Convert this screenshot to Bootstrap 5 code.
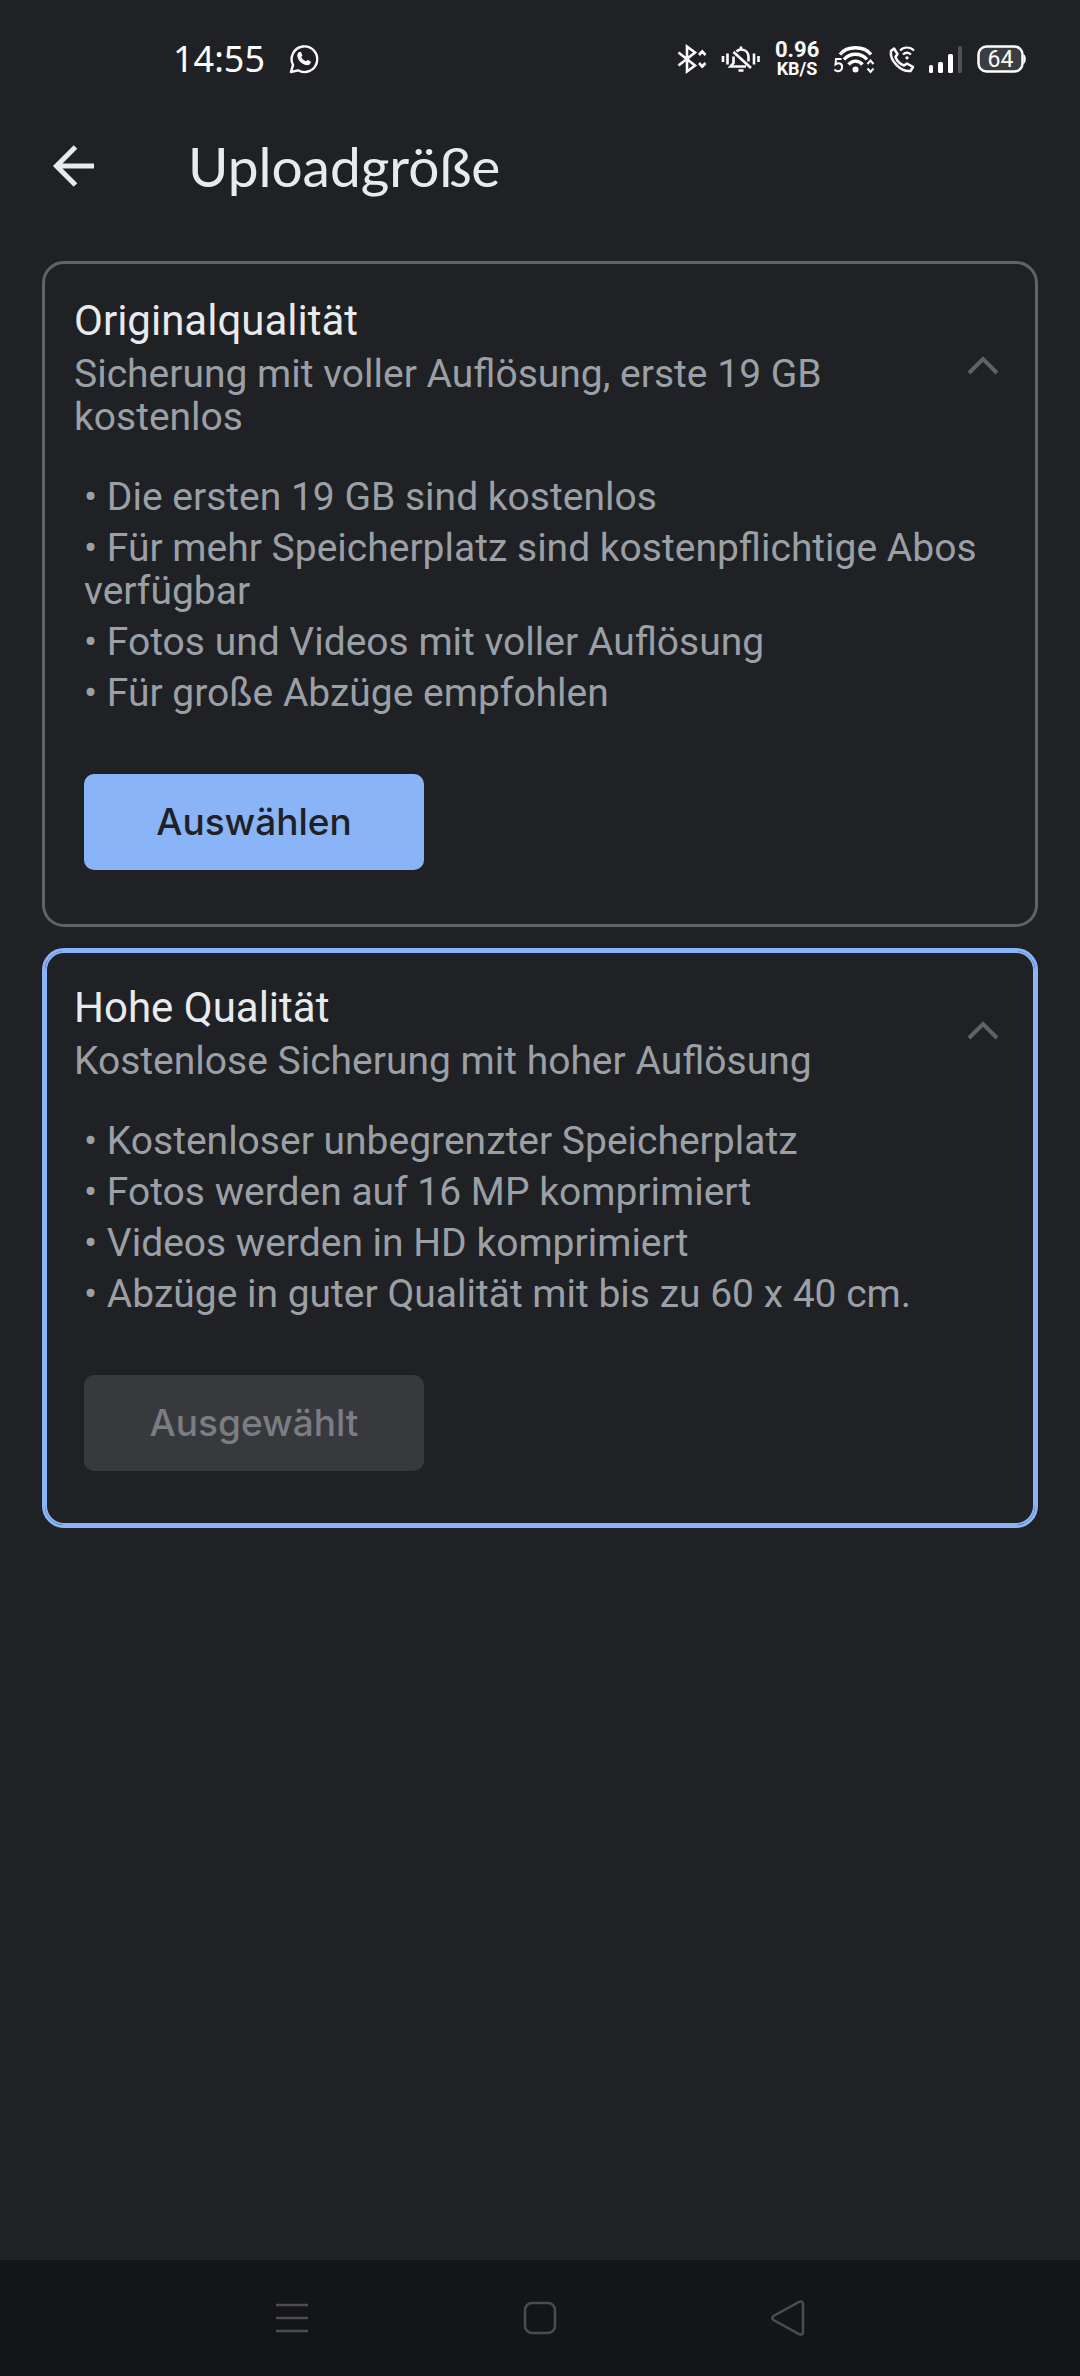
<!DOCTYPE html>
<html lang="de">
<head>
<meta charset="utf-8">
<meta name="viewport" content="width=device-width, initial-scale=1">
<title>Uploadgröße</title>
<link href="https://cdn.jsdelivr.net/npm/bootstrap@5.3.0/dist/css/bootstrap.min.css" rel="stylesheet">
<style>
  body { background: #202124; color: #e8eaed; font-family: Roboto, sans-serif; }
  svg { display: block; flex: none; overflow: visible; }
  .status-bar { height: 118px; padding: 0 53px 0 173px; color: #fff; }
  .status-time { font: 400 36px/40px "Noto Sans", sans-serif; }
  .status-icons { gap: 14px; }
  .net-speed { width: 44px; font-weight: 700; font-size: 22px; line-height: 20px; text-align: center; }
  .net-speed .unit { font-size: 18px; line-height: 18px; }
  .battery-text { font: 400 23px Roboto, sans-serif; }
  .app-bar { height: 96px; padding: 0 48px; gap: 88px; }
  .app-bar h1 { font: 400 55px/64px Lato, sans-serif; }
  .icon-btn { background: none; border: 0; padding: 0; color: inherit; }
  .options { padding: 47px 42px; gap: 21px; }
  .option { background: none; border: 3px solid #5f6368; border-radius: 22px; color: #9aa0a6; padding: 32px 36px 54px 29px; }
  .option.selected { border-color: #8ab4f8; box-shadow: inset 0 0 0 2px #8ab4f8; }
  .option h2 { font-size: 42px; font-weight: 400; line-height: 50px; color: #e8eaed; margin-bottom: 7px; }
  .option p, .option li { font-size: 39px; line-height: 43px; }
  .option-head { gap: 100px; }
  .option ul { margin: 37px 0 59px; padding-left: 10px; gap: 8px; }
  .toggle { color: #5f6368; }
  .choose { width: 340px; height: 96px; margin-left: 10px; border: 0; border-radius: 10px; font: 500 37px/48px Inter, sans-serif;
    --bs-btn-bg: #8ab4f8; --bs-btn-color: #202124; --bs-btn-hover-bg: #9dc0f9;
    --bs-btn-disabled-bg: #38393d; --bs-btn-disabled-color: #7b7d82; --bs-btn-disabled-opacity: 1; }
  .nav-keys { height: 116px; background: #141517; color: #4b4c4e; gap: 214px; }
</style>
</head>
<body>
<div class="d-flex flex-column min-vh-100">
  <header>
    <div class="status-bar d-flex align-items-center justify-content-between">
      <div class="d-flex align-items-center gap-4">
        <span class="status-time">14:55</span>
        <svg width="30" height="30" viewBox="0 0 30 30" fill="none" stroke="#fff" stroke-width="2.4"><path d="M2 28l2-7A12.8 12.8 0 1 1 9 26.300z" stroke-linejoin="round"/><path d="M9.500 8.500c1.500-1.500 2.500-.8 3.800 2.600.2.700-1.200 1.700-1 2.200 1 2 2.700 3.300 4.400 4 .7.200 1.500-1.500 2.200-1.200 3.200 1.500 3.200 1.700 2.700 3-1.500 3.200-5 2.500-8.600.2-3.700-2.700-6.300-7.500-3.500-10.800z" fill="#fff" stroke="none"/></svg>
      </div>
      <div class="status-icons d-flex align-items-center">
        <svg width="30" height="28" viewBox="0 0 30 28" fill="none" stroke="#fff" stroke-width="2.600"><path d="M1.500 7.500L18 20.500l-8 6V1.500l8 6L1.500 20.500"/><path d="M22 10l3.200-3.500L28.500 10M22 18l3.200 3.500 3.300-3.500"/></svg>
        <svg width="40" height="28" viewBox="0 0 40 28" fill="none" stroke="#fff" stroke-width="2.600"><path d="M2 11v6M6.500 8.500v11M33 8.500v11M37.500 11v6"/><path d="M12.500 7L30 23M12.500 11.500v6.500L9.500 21.500H25M15.500 6.500C17 5 18.500 4.500 20 4.500c5 0 7.500 3.500 7.500 7.500v4.500"/><path d="M20 1.500v3M17.500 25.500h5"/></svg>
        <div class="net-speed d-flex flex-column"><span>0.96</span><span class="unit">KB/S</span></div>
        <svg width="42" height="28" viewBox="0 0 42 28" fill="none" stroke="#fff"><path d="M8.500 14H3l-.5 5.500c4-2.500 7-.5 6.500 3-.3 4-5 5-7.500 2" stroke-width="2"/><path d="M7 9.500C14 .5 31 .5 38 9.500M11 14.500c6-7 17-7 23 0M15.500 19.500c4-4.500 10-4.500 14 0" stroke-width="3.400"/><circle cx="22.500" cy="24.500" r="3" fill="#fff" stroke="none"/><path d="M34.500 19l3-3.500 3 3.500M34.500 23.500l3 3.500 3-3.500" stroke-width="2"/></svg>
        <svg width="26" height="28" viewBox="0 0 26 28" fill="none" stroke="#fff" stroke-width="2.500" stroke-linejoin="round"><path d="M2 6L5 3.500 8.500 9l-2 3c1.500 4 4.500 7 8.500 8.500l3-2 6 3.500-2.500 4C12 27 .5 16 2 6z"/><path d="M11 5.500c4-4 10-4 14 0M14 9.500c2.500-2.200 5.500-2.200 8 0" stroke-width="2.200"/><circle cx="18" cy="12.800" r="1.600" fill="#fff" stroke="none"/></svg>
        <svg width="34" height="28" viewBox="0 0 34 28" fill="#fff"><rect x="0" y="20" width="4" height="8" rx="1.500"/><rect x="9" y="17" width="5" height="11" rx="1.500"/><rect x="19" y="9" width="5" height="19" rx="1.500"/><rect x="29" y="1" width="4" height="27" rx="1.500" fill="#515256"/></svg>
        <svg width="50" height="28" viewBox="0 0 50 28"><rect x="1.500" y="1.500" width="44" height="25" rx="8" fill="#3c3d40" stroke="#fff" stroke-width="2.500"/><path d="M46.500 9c3 1 3 9 0 10z" fill="#fff"/><text class="battery-text" x="23.500" y="22" fill="#fff" text-anchor="middle">64</text></svg>
      </div>
    </div>
    <div class="app-bar d-flex align-items-center">
      <button class="icon-btn" type="button" aria-label="Zurück"><svg width="52" height="52" viewBox="0 0 52 52" fill="none" stroke="currentColor" stroke-width="5"><path d="M46 26H8M27.500 7L8.500 26l19 19"/></svg></button>
      <h1 class="m-0">Uploadgröße</h1>
    </div>
  </header>

  <main class="options d-flex flex-column">
    <section class="card option">
      <div class="option-head d-flex align-items-center justify-content-between">
        <div>
          <h2>Originalqualität</h2>
          <p class="m-0">Sicherung mit voller Auflösung, erste 19 GB kostenlos</p>
        </div>
        <button class="icon-btn toggle" type="button" aria-label="Einklappen"><svg width="32" height="24" viewBox="0 0 32 24" fill="none" stroke="currentColor" stroke-width="4"><path d="M2 17L16 3l14 14"/></svg></button>
      </div>
      <ul class="list-unstyled d-flex flex-column">
        <li>• Die ersten 19 GB sind kostenlos</li>
        <li>• Für mehr Speicherplatz sind kostenpflichtige Abos verfügbar</li>
        <li>• Fotos und Videos mit voller Auflösung</li>
        <li>• Für große Abzüge empfohlen</li>
      </ul>
      <button class="btn choose" type="button">Auswählen</button>
    </section>

    <section class="card option selected">
      <div class="option-head d-flex align-items-center justify-content-between">
        <div>
          <h2>Hohe Qualität</h2>
          <p class="m-0">Kostenlose Sicherung mit hoher Auflösung</p>
        </div>
        <button class="icon-btn toggle" type="button" aria-label="Einklappen"><svg width="32" height="24" viewBox="0 0 32 24" fill="none" stroke="currentColor" stroke-width="4"><path d="M2 17L16 3l14 14"/></svg></button>
      </div>
      <ul class="list-unstyled d-flex flex-column">
        <li>• Kostenloser unbegrenzter Speicherplatz</li>
        <li>• Fotos werden auf 16 MP komprimiert</li>
        <li>• Videos werden in HD komprimiert</li>
        <li>• Abzüge in guter Qualität mit bis zu 60 x 40 cm.</li>
      </ul>
      <button class="btn choose" type="button" disabled>Ausgewählt</button>
    </section>
  </main>

  <nav class="nav-keys d-flex align-items-center justify-content-center mt-auto" aria-label="System">
    <button class="icon-btn" type="button" aria-label="Letzte Apps"><svg width="34" height="36" viewBox="0 0 34 36" stroke="currentColor" stroke-width="2.500"><path d="M1 5h32M1 18h32M1 31h32"/></svg></button>
    <button class="icon-btn" type="button" aria-label="Startbildschirm"><svg width="34" height="36" viewBox="0 0 34 36" fill="none" stroke="currentColor" stroke-width="2.500"><rect x="2" y="3" width="30" height="30" rx="7"/></svg></button>
    <button class="icon-btn" type="button" aria-label="Zurück"><svg width="34" height="36" viewBox="0 0 34 36" fill="none" stroke="currentColor" stroke-width="2.500"><path d="M2.500 16Q0 18 2.500 20L28 34.200q3.500 1.300 4-2V3.800q-.5-3.300-4-2z"/></svg></button>
  </nav>
</div>
<script src="https://cdn.jsdelivr.net/npm/bootstrap@5.3.0/dist/js/bootstrap.bundle.min.js"></script>
</body>
</html>
